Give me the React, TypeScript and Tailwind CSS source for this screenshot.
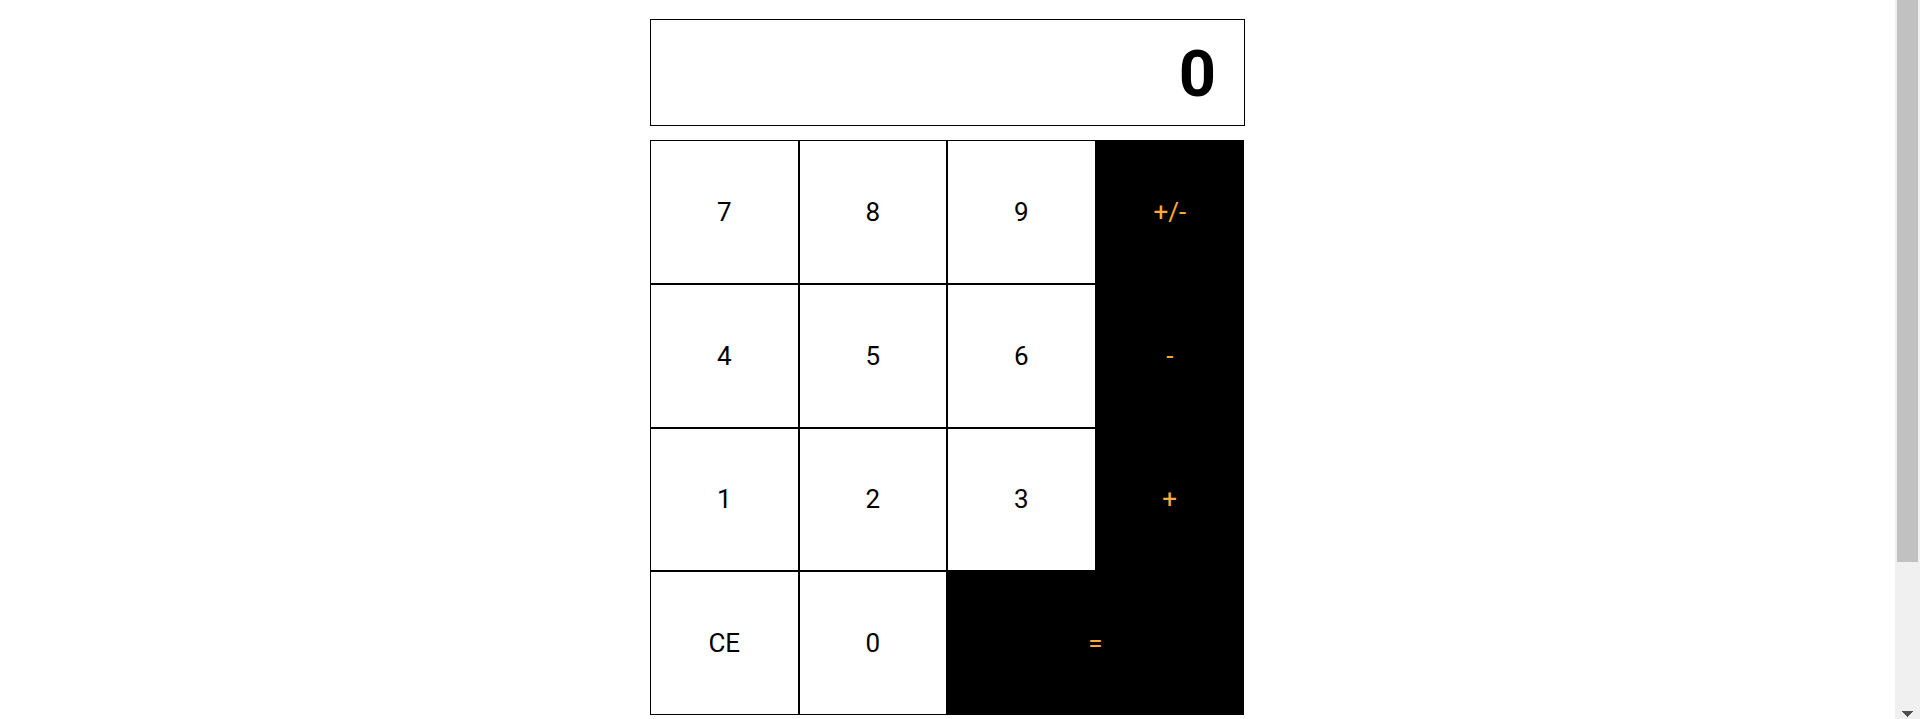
import { useState } from "react";

type Key = { label: string; operator?: boolean; wide?: boolean };

const keys: Key[] = [
  { label: "7" },
  { label: "8" },
  { label: "9" },
  { label: "+/-", operator: true },
  { label: "4" },
  { label: "5" },
  { label: "6" },
  { label: "-", operator: true },
  { label: "1" },
  { label: "2" },
  { label: "3" },
  { label: "+", operator: true },
  { label: "CE" },
  { label: "0" },
  { label: "=", operator: true, wide: true },
];

function apply(left: number, right: number, operator: string) {
  return operator === "+" ? left + right : left - right;
}

export default function App() {
  const [display, setDisplay] = useState("0");
  const [stored, setStored] = useState(0);
  const [pending, setPending] = useState("");
  const [fresh, setFresh] = useState(true);

  function press(label: string) {
    if (label === "CE") {
      setDisplay("0");
      setStored(0);
      setPending("");
      setFresh(true);
    } else if (label === "+/-") {
      setDisplay(String(-Number(display) || 0));
    } else if (label === "+" || label === "-" || label === "=") {
      const value = pending ? apply(stored, Number(display), pending) : Number(display);
      setStored(value);
      setDisplay(String(value));
      setPending(label === "=" ? "" : label);
      setFresh(true);
    } else {
      setDisplay(fresh ? label : display + label);
      setFresh(false);
    }
  }

  return (
    <div className="flex min-h-screen bg-white font-['Roboto',sans-serif] text-black">
      <main className="flex-1 pt-[19px]">
        <div className="mx-auto w-full max-w-[595px]">
          <output
            aria-label="Result"
            className="mb-3.5 flex h-[107px] items-center justify-end overflow-hidden border border-black px-7 pt-1 text-[65px] leading-none font-bold"
          >
            {display}
          </output>
          <div className="mr-px grid h-[575px] grid-cols-4 grid-rows-4">
            {keys.map((key) => (
              <button
                key={key.label}
                type="button"
                onClick={() => press(key.label)}
                className={`border border-black text-[26px] leading-8 ${
                  key.operator ? "bg-black text-[#ffa93a]" : "bg-white text-black"
                } ${key.wide ? "col-span-2" : ""}`}
              >
                {key.label}
              </button>
            ))}
          </div>
        </div>
      </main>
      <div
        aria-hidden="true"
        className="sticky top-0 flex h-screen w-[25px] flex-col items-center justify-between bg-[#f0f0f0] pb-0.5"
      >
        <div className="h-[78.4%] w-[21px] bg-[#c1c1c1]" />
        <svg width="11" height="6" viewBox="0 0 11 6" fill="#505050" shapeRendering="crispEdges">
          <path d="M0 0h11v1h-1v1h-1v1h-1v1h-1v1h-1v1h-1v-1h-1v-1h-1v-1h-1v-1h-1v-1h-1z" />
        </svg>
      </div>
    </div>
  );
}
